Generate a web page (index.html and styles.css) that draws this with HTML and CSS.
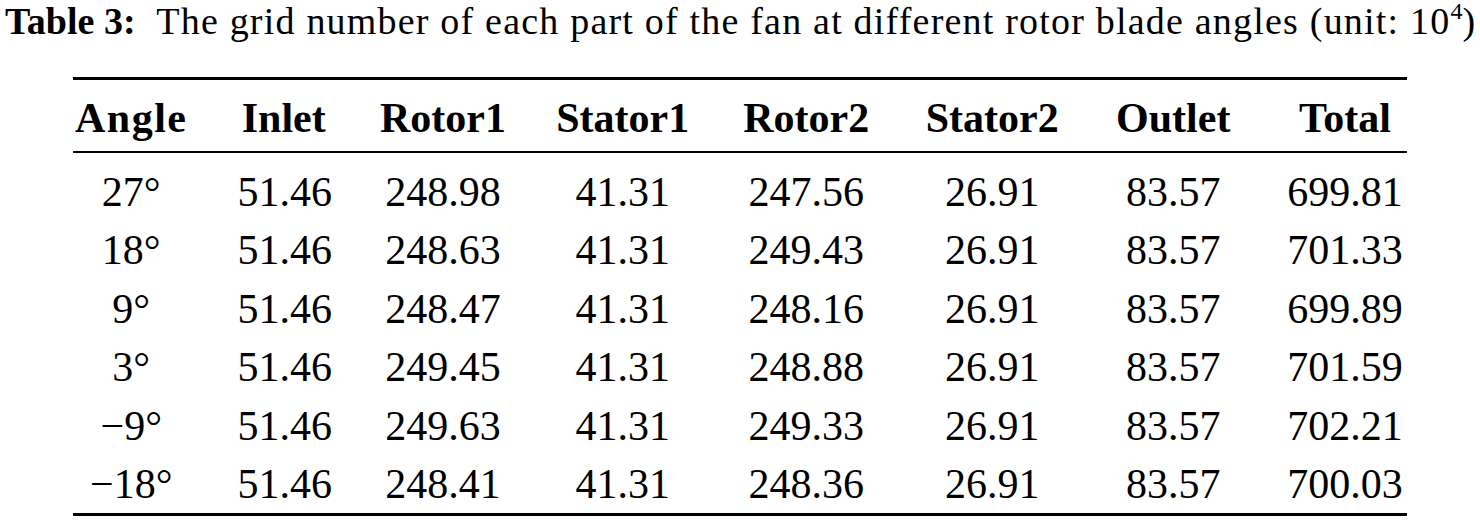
FILE: index.html
```html
<!DOCTYPE html>
<html lang="en">
<head>
<meta charset="UTF-8">
<title>Table 3</title>
<link rel="stylesheet" href="styles.css">
</head>
<body>
<div class="caption"><b>Table 3:</b>&nbsp; The grid number of each part of the fan at different rotor blade angles (unit: 10<sup>4</sup>)</div>
<table class="grid">
<colgroup>
<col class="c-angle">
<col class="c-inlet">
<col class="c-rotor1">
<col class="c-stator1">
<col class="c-rotor2">
<col class="c-stator2">
<col class="c-outlet">
<col class="c-total">
</colgroup>
<thead>
<tr>
<th>Angle</th>
<th>Inlet</th>
<th>Rotor1</th>
<th>Stator1</th>
<th>Rotor2</th>
<th>Stator2</th>
<th>Outlet</th>
<th>Total</th>
</tr>
</thead>
<tbody>
<tr><td>27°</td><td>51.46</td><td>248.98</td><td>41.31</td><td>247.56</td><td>26.91</td><td>83.57</td><td>699.81</td></tr>
<tr><td>18°</td><td>51.46</td><td>248.63</td><td>41.31</td><td>249.43</td><td>26.91</td><td>83.57</td><td>701.33</td></tr>
<tr><td>9°</td><td>51.46</td><td>248.47</td><td>41.31</td><td>248.16</td><td>26.91</td><td>83.57</td><td>699.89</td></tr>
<tr><td>3°</td><td>51.46</td><td>249.45</td><td>41.31</td><td>248.88</td><td>26.91</td><td>83.57</td><td>701.59</td></tr>
<tr><td>−9°</td><td>51.46</td><td>249.63</td><td>41.31</td><td>249.33</td><td>26.91</td><td>83.57</td><td>702.21</td></tr>
<tr><td>−18°</td><td>51.46</td><td>248.41</td><td>41.31</td><td>248.36</td><td>26.91</td><td>83.57</td><td>700.03</td></tr>
</tbody>
</table>
</body>
</html>
```

FILE: styles.css
```css
body {
margin: 0;
background-color: #fff;
color: #000;
font-family: "Liberation Serif", "DejaVu Serif", serif;
}
.caption {
font-size: 38px;
line-height: 40px;
letter-spacing: 1.2px;
padding: 1px 0 0 5px;
margin-bottom: 36px;
white-space: nowrap;
}
.caption b {
letter-spacing: 0;
}
.caption sup {
font-size: 24px;
line-height: 0;
vertical-align: 15px;
letter-spacing: 0;
}
.grid {
margin-left: 73px;
width: 1334px;
table-layout: fixed;
border-collapse: collapse;
font-size: 42px;
}
.c-angle { width: 139.5px; }
.c-inlet { width: 142.5px; }
.c-rotor1 { width: 176px; }
.c-stator1 { width: 183.5px; }
.c-rotor2 { width: 183.5px; }
.c-stator2 { width: 188.5px; }
.c-outlet { width: 173.5px; }
.c-total { width: 147px; }
.grid th,
.grid td {
text-align: center;
line-height: 40px;
padding: 0 25px;
white-space: nowrap;
}
.grid th:first-child,
.grid td:first-child {
padding-left: 2px;
}
.grid th:last-child,
.grid td:last-child {
padding-right: 2px;
}
.grid th {
font-weight: bold;
border-top: 3px solid #000;
border-bottom: 2px solid #000;
padding-top: 18px;
padding-bottom: 13px;
}
.grid th:first-child {
letter-spacing: 1.5px;
}
.grid td {
padding-top: 18.5px;
padding-bottom: 0;
}
.grid tbody tr:last-child td {
padding-bottom: 9px;
border-bottom: 3px solid #000;
}
```
